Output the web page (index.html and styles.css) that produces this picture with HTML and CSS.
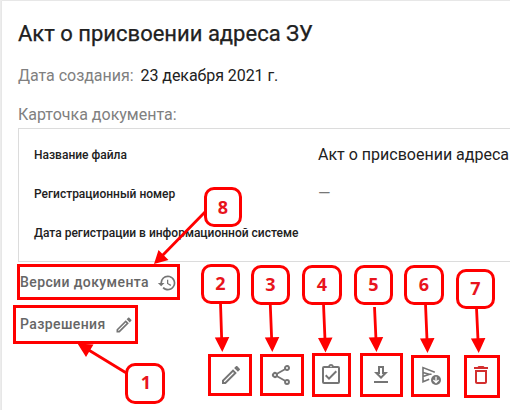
FILE: index.html
```html
<!DOCTYPE html>
<html lang="ru">
<head>
<meta charset="utf-8">
<title>Акт о присвоении адреса ЗУ</title>
<link rel="stylesheet" href="styles.css">
</head>
<body>
<main class="card">
  <h1 class="title"><span>Акт о присвоении адреса ЗУ</span></h1>
  <p class="created"><span class="muted">Дата создания:</span><span class="date">23 декабря 2021 г.</span></p>
  <p class="caption"><span>Карточка документа:</span></p>
  <dl class="details">
    <dt>Название файла</dt><dd>Акт о присвоении адреса</dd>
    <dt>Регистрационный номер</dt><dd class="dash">—</dd>
    <dt>Дата регистрации в информационной системе</dt><dd></dd>
  </dl>
  <div class="link versions"><span>Версии документа</span>
    <svg class="icon small" viewBox="0 0 24 24"><path d="M13 3a9 9 0 0 0-9 9H1l4 4 4-4H6a7 7 0 1 1 2.06 4.94l-1.42 1.42A9 9 0 1 0 13 3zm-1 5v5l4.25 2.52.77-1.28-3.52-2.09V8z"/></svg>
  </div>
  <div class="link rights"><span>Разрешения</span>
    <svg class="icon small" viewBox="0 0 24 24"><path d="M14.06 9.02l.92.92L5.92 19H5v-.92l9.06-9.06M17.66 3c-.25 0-.51.1-.7.29l-1.83 1.83 3.75 3.75 1.83-1.83a1 1 0 0 0 0-1.41l-2.34-2.34c-.2-.2-.45-.29-.71-.29zm-3.6 3.19L3 17.25V21h3.75L17.81 9.94l-3.75-3.75z"/></svg>
  </div>
  <div class="actions">
    <svg class="icon" viewBox="0 0 24 24"><path d="M14.06 9.02l.92.92L5.92 19H5v-.92l9.06-9.06M17.66 3c-.25 0-.51.1-.7.29l-1.83 1.83 3.75 3.75 1.83-1.83a1 1 0 0 0 0-1.41l-2.34-2.34c-.2-.2-.45-.29-.71-.29zm-3.6 3.19L3 17.25V21h3.75L17.81 9.94l-3.75-3.75z"/></svg>
    <svg class="icon" viewBox="0 0 24 24"><path d="M18 16.08c-.76 0-1.44.3-1.96.77L8.91 12.7c.05-.23.09-.46.09-.7s-.04-.47-.09-.7l7.05-4.11A3 3 0 1 0 15 5c0 .24.04.47.09.7L8.04 9.81A3 3 0 1 0 8.04 14.19l7.12 4.16c-.05.21-.08.43-.08.65A2.92 2.92 0 1 0 18 16.08zM18 4a1 1 0 1 1 0 2 1 1 0 0 1 0-2zM6 13a1 1 0 1 1 0-2 1 1 0 0 1 0 2zm12 7.02a1 1 0 1 1 0-2 1 1 0 0 1 0 2z"/></svg>
    <svg class="icon" viewBox="0 0 24 24"><path fill-rule="evenodd" d="M19 3h-4.18a3 3 0 0 0-5.64 0H5a2 2 0 0 0-2 2v14a2 2 0 0 0 2 2h14a2 2 0 0 0 2-2V5a2 2 0 0 0-2-2zm-7-.25a.75.75 0 1 1 0 1.5.75.75 0 0 1 0-1.5zM19 19H5V5h14v14z"/><path d="M18 9l-1.41-1.42L10 14.17l-2.59-2.58L6 13l4 4z"/></svg>
    <svg class="icon" viewBox="0 0 24 24"><path d="M19 9h-4V3H9v6H5l7 7 7-7zm-8 2V5h2v6h1.17L12 13.17 9.83 11H11zm-6 7h14v2H5z"/></svg>
    <svg class="icon" viewBox="0 0 24 24"><path class="stroke" d="M15.800 9.300L4 4.600v14.200l6.200-2.600M4 9.400l6.500 1.900L4 13.600M10 11.300h2.500"/><circle cx="17" cy="17" r="5"/><path class="inner" d="M17 13.800v5.700m-2.600-2.500l2.600 2.600 2.600-2.600"/></svg>
    <svg class="icon danger" viewBox="0 0 24 24"><path d="M6 19c0 1.1.9 2 2 2h8c1.1 0 2-.9 2-2V7H6v12zM8 9h8v10H8V9zm7.5-5l-1-1h-5l-1 1H5v2h14V4z"/></svg>
  </div>
</main>
<svg class="marks" viewBox="0 0 510 410">
  <g class="frames">
    <rect x="18.5" y="265.5" width="160" height="33"/>
    <rect x="14.5" y="306.5" width="122" height="36"/>
    <rect x="209.5" y="355.5" width="41" height="39"/>
    <rect x="261.5" y="355.5" width="41" height="39"/>
    <rect x="313.5" y="354.5" width="36" height="41"/>
    <rect x="361.5" y="354.5" width="40" height="41"/>
    <rect x="412.5" y="356.5" width="36" height="39"/>
    <rect x="465.5" y="356.5" width="33" height="40"/>
  </g>
  <path class="lines" d="M205 212L161 257M125.500 372.500L87 349M220.500 303L221.700 340M270.300 305L271.700 340M323.500 304L325 340M374.500 307L376 340M425.500 304L427 340M476.500 308L478 340"/>
  <path class="heads" d="M154 264l4.500-14 10 10zM77.500 343.500l16 1-7.500 12.500zM222.300 352l-7.500-14.500 14.500-.5zM272.300 352l-7.500-14.500 14.500-.5zM325.500 352.500l-7.500-14.500 14.500-.5zM376.500 352l-7.800-14.500 14.500-.5zM427.500 353l-7.500-14.500 14.500-.5zM478.700 353l-7.800-14.500 14.500-.5z"/>
</svg>
<span class="tag n1">1</span>
<span class="tag n2">2</span>
<span class="tag n3">3</span>
<span class="tag n4">4</span>
<span class="tag n5">5</span>
<span class="tag n6">6</span>
<span class="tag n7">7</span>
<span class="tag n8">8</span>
</body>
</html>
```
FILE: styles.css
```css
* { box-sizing: border-box; }
body {
  margin: 0;
  width: 510px;
  height: 410px;
  overflow: hidden;
  position: relative;
  background: #ececec;
  font-family: Roboto, "Liberation Sans", sans-serif;
  color: #212121;
}
.card {
  margin: 1px 0 0 2px;
  height: 409px;
  padding: 17px 0 0 16px;
  background: #fff;
  box-shadow: 0 0 1px #ccc;
}
h1, p, dl, dd { margin: 0; }
.title { font-size: 22px; font-weight: 400; line-height: 32px; white-space: nowrap; -webkit-text-stroke: .25px; }
.created { display: flex; gap: 7px; margin-top: 16px; font-size: 16px; line-height: 20px; }
.date { letter-spacing: -.06px; }
.muted, .caption { color: #808080; }
.muted { letter-spacing: -.03px; }
.caption { margin-top: 19px; font-size: 16px; line-height: 20px; }
.details {
  display: grid;
  grid-template-columns: 284px 1fr;
  grid-auto-rows: 39px;
  align-items: center;
  height: 134px;
  margin-top: 3px;
  padding: 6px 0 0 15px;
  border: 1px solid #dcdcdc;
  border-right: 0;
  white-space: nowrap;
}
.details dt { font-size: 12px; font-weight: 500; }
.details dd { font-size: 16px; }
.details .dash { font-size: 16px; color: #777; }
.link {
  display: flex;
  align-items: center;
  height: 20px;
  padding-left: 2px;
  color: #666;
  font-size: 14px;
  font-weight: 500;
  letter-spacing: .4px;
}
.link span { padding-bottom: 2px; }
.versions { margin-top: 11px; gap: 8px; }
.rights { margin-top: 22px; gap: 8px; }
.icon { width: 24px; height: 24px; flex: none; fill: #757575; }
.small { width: 20px; height: 20px; }
.danger { fill: #d32f2f; }
.stroke { fill: none; stroke: #757575; stroke-width: 1.6; }
.inner { fill: none; stroke: #fff; stroke-width: 1.3; }
.actions { display: flex; gap: 26px; margin: 28px 0 0 201px; }
.marks { position: absolute; left: 0; top: 0; width: 510px; height: 410px; }
.frames { fill: none; stroke: #f00; stroke-width: 3; }
.lines { fill: none; stroke: #f00; stroke-width: 2.8; }
.heads { fill: #f00; }
.tag {
  position: absolute;
  display: flex;
  align-items: center;
  justify-content: center;
  width: 39px;
  height: 40px;
  padding-bottom: 2px;
  border: 3px solid #f00;
  border-radius: 10px;
  background: #fff;
  color: #e8141c;
  font: 700 18px/20px "Open Sans", sans-serif;
}
.n1 { left: 125px; top: 363px; width: 40px; height: 41px; padding: 0 0 3px 2px; }
.n2 { left: 201px; top: 264px; }
.n3 { left: 251px; top: 265px; }
.n4 { left: 302px; top: 265px; width: 40px; }
.n5 { left: 354px; top: 265px; }
.n6 { left: 404px; top: 265px; width: 40px; }
.n7 { left: 456px; top: 269px; }
.n8 { left: 204px; top: 187px; width: 38px; padding-bottom: 0; }
```
